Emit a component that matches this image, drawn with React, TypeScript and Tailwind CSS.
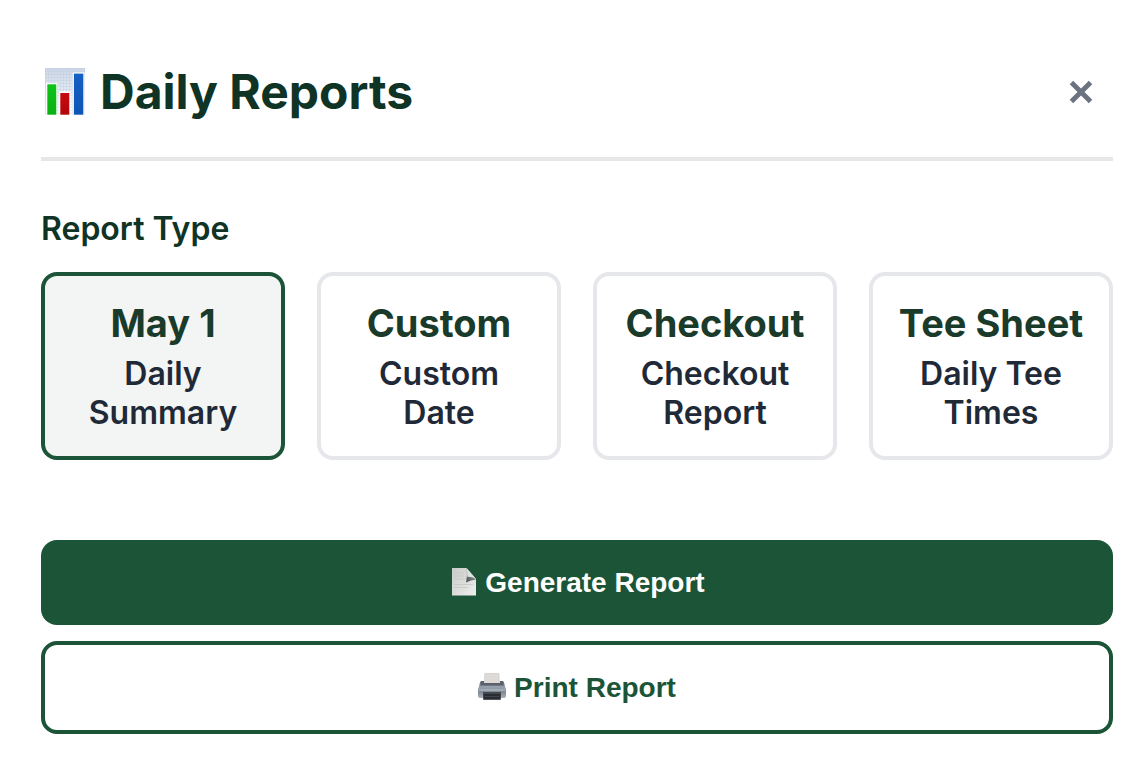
import { useState } from "react";

const reportTypes = [
  { title: "May 1", lines: ["Daily", "Summary"] },
  { title: "Custom", lines: ["Custom", "Date"] },
  { title: "Checkout", lines: ["Checkout", "Report"] },
  { title: "Tee Sheet", lines: ["Daily Tee", "Times"] },
];

function ChartIcon() {
  return (
    <svg viewBox="0 0 40 48" className="h-12 w-10 shrink-0" aria-hidden="true">
      <defs>
        <linearGradient id="paper" x1="0" y1="0" x2="0" y2="1">
          <stop offset="0" stopColor="#cdd6e3" />
          <stop offset="0.5" stopColor="#e6ebf2" />
          <stop offset="1" stopColor="#ffffff" />
        </linearGradient>
        <pattern id="grid" width="3" height="3" patternUnits="userSpaceOnUse">
          <path d="M0 .5H3M.5 0V3" stroke="#b3c8e0" strokeWidth=".6" opacity=".6" />
        </pattern>
        <linearGradient id="green" x1="0" y1="0" x2="0" y2="1">
          <stop offset="0" stopColor="#0fc41a" />
          <stop offset="1" stopColor="#0ab012" />
        </linearGradient>
        <linearGradient id="red" x1="0" y1="0" x2="0" y2="1">
          <stop offset="0" stopColor="#c80a10" />
          <stop offset="1" stopColor="#b2060b" />
        </linearGradient>
        <linearGradient id="blue" x1="0" y1="0" x2="0" y2="1">
          <stop offset="0" stopColor="#1560c4" />
          <stop offset="1" stopColor="#0d54b6" />
        </linearGradient>
      </defs>
      <rect width="40" height="47" fill="url(#paper)" />
      <rect width="40" height="47" fill="url(#grid)" />
      <path d="M1.2 15H12.3V48H1.2ZM14.3 23.5H25.5V48H14.3ZM27.7 4.5H39.5V48H27.7Z" fill="#fff" />
      <rect x="2.3" y="16.3" width="9" height="30.4" fill="url(#green)" />
      <rect x="15.3" y="25" width="9" height="21.7" fill="url(#red)" />
      <rect x="28.9" y="5.6" width="9.4" height="41.1" fill="url(#blue)" />
    </svg>
  );
}

function PageIcon() {
  return (
    <svg viewBox="-2 0 28 30" className="h-[30px] w-7 shrink-0" aria-hidden="true">
      <defs>
        <linearGradient id="sheet" x1="0" y1="0" x2="1" y2="1">
          <stop offset="0" stopColor="#c9cbc8" />
          <stop offset="1" stopColor="#efefee" />
        </linearGradient>
        <linearGradient id="fold" x1="0" y1="1" x2="1" y2="0">
          <stop offset="0" stopColor="#4d5552" />
          <stop offset="0.6" stopColor="#7f8784" />
          <stop offset="1" stopColor="#e3e6e4" />
        </linearGradient>
      </defs>
      <path d="M1 0H15.5L25 11V27.5H1Z" fill="url(#sheet)" />
      <path d="M3.5 5H13M3.5 8H13M3.5 11H14M3.5 16.5H22M3.5 19.5H17" stroke="#bcbfbd" strokeWidth=".6" />
      <path d="M15.5 0L25 11.5Q20 12 15 14.5Q16.5 6 15.5 0Z" fill="url(#fold)" />
      <path d="M15.5 0L25 11Q21 8.5 16.3 8.8Q16.5 4 15.5 0Z" fill="#dfe3e1" />
    </svg>
  );
}

function PrinterIcon() {
  return (
    <svg viewBox="0 0 28 30" className="h-[30px] w-7 shrink-0" aria-hidden="true">
      <defs>
        <linearGradient id="body" x1="0" y1="0" x2="0" y2="1">
          <stop offset="0" stopColor="#555d67" />
          <stop offset="0.35" stopColor="#99a3af" />
          <stop offset="0.65" stopColor="#7f8995" />
          <stop offset="1" stopColor="#a9b1ba" />
        </linearGradient>
      </defs>
      <path d="M6.8 .5Q14 -.3 21 .5L21.5 11H6.3Z" fill="#dddad7" stroke="#c1bfbd" strokeWidth=".5" />
      <path d="M3.5 8H6V10H22V8H24.5Q26 8 26.5 11.5L28 16.5V23Q28 25 26 25H2Q0 25 0 23V16.5L1.5 11.5Q2 8 3.5 8Z" fill="url(#body)" />
      <path d="M3.5 8H6V10H22V8H24.5L25.8 12.5H2.2Z" fill="#5b626c" />
      <path d="M1 17H27" stroke="#c3c9cf" strokeWidth=".9" />
      <path d="M5.2 19H22.8V26.8H5.2Z" fill="#292c31" />
      <path d="M5.2 19H22.8V21H5.2Z" fill="#454a51" />
      <path d="M6.5 23.5H21.5" stroke="#4c5056" strokeWidth=".7" />
    </svg>
  );
}

export default function App() {
  const [selected, setSelected] = useState("May 1");

  return (
    <main className="min-h-screen bg-white pt-[63px] pr-[27px] pb-8 pl-[41px] font-['Inter',sans-serif]">
      <header className="flex items-center justify-between border-b-4 border-[#e5e7e9] pr-5 pb-9">
        <h1 className="flex items-center gap-[15px] pl-1 text-[48px] leading-[58px] font-bold text-[#0f3324]">
          <ChartIcon />
          Daily Reports
        </h1>
        <button type="button" aria-label="Close" className="flex size-6 items-center justify-center text-[#6b7280]">
          <svg viewBox="0 0 24 24" className="size-6" aria-hidden="true">
            <path
              d="M4.2 4.2L19.8 19.8M19.8 4.2L4.2 19.8"
              fill="none"
              stroke="currentColor"
              strokeWidth="4.9"
              strokeLinecap="square"
            />
          </svg>
        </button>
      </header>

      <section className="pt-12">
        <h2 id="report-type" className="text-[32px] leading-[39px] font-semibold text-[#0f3324]">
          Report Type
        </h2>
        <div role="group" aria-labelledby="report-type" className="mt-6 grid grid-cols-4 gap-8">
          {reportTypes.map(({ title, lines }) => (
            <button
              key={title}
              type="button"
              aria-pressed={selected === title}
              onClick={() => setSelected(title)}
              className={`rounded-2xl border-4 py-6 text-center ${
                selected === title ? "border-[#1c5438] bg-[#f3f5f4]" : "border-[#e5e7ea] bg-white"
              }`}
            >
              <span className="block text-[38px] leading-[46px] font-bold whitespace-nowrap text-[#1a3a2a]">{title}</span>
              <span className="mt-2 block text-[32px] leading-[39px] font-semibold text-[#1f2937]">
                {lines[0]}
                <br />
                {lines[1]}
              </span>
            </button>
          ))}
        </div>
      </section>

      <div className="mt-20 flex flex-col gap-4 font-['Liberation_Sans',Arial,sans-serif] text-[28px] leading-[33px] font-bold">
        <button type="button" className="flex items-center justify-center gap-2 rounded-2xl bg-[#1c5438] py-[26px] text-white">
          <PageIcon />
          Generate Report
        </button>
        <button
          type="button"
          className="flex items-center justify-center gap-2 rounded-2xl border-4 border-[#1c5438] bg-white py-[26px] text-[#1c5438]"
        >
          <PrinterIcon />
          Print Report
        </button>
      </div>
    </main>
  );
}
